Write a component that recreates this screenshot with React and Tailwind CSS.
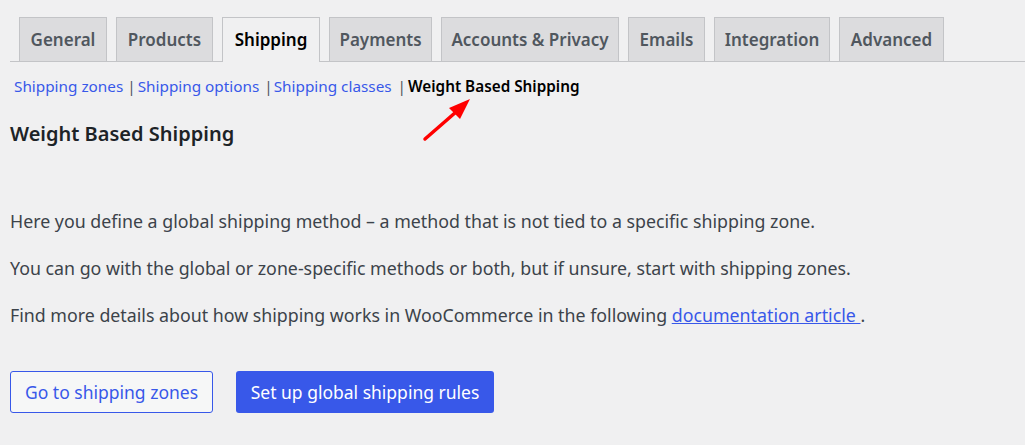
import React from "react";

const tabs = [
  { label: "General", w: "w-[88px]" },
  { label: "Products", w: "w-[97px]" },
  { label: "Shipping", w: "w-[98px]", active: true },
  { label: "Payments", w: "w-[103px]" },
  { label: "Accounts & Privacy", w: "w-[178px]" },
  { label: "Emails", w: "w-[77px]" },
  { label: "Integration", w: "w-[116px]" },
  { label: "Advanced", w: "w-[105px]" },
];

function Tabs() {
  return (
    <div className="flex items-end gap-[9px] pl-[9px] ml-[10px] border-b border-[#c3c4c7] h-[62px]">
      {tabs.map((t) =>
        t.active ? (
          <div key={t.label} className={`${t.w} h-[45px] -mb-px flex items-center justify-center whitespace-nowrap border border-b-0 border-[#c3c4c7] bg-[#f0f0f1] text-black text-[17px] font-semibold`}>
            {t.label}
          </div>
        ) : (
          <div key={t.label} className={`${t.w} h-[44px] flex items-center justify-center whitespace-nowrap border border-b-0 border-[#c3c4c7] bg-[#dcdcde] text-[#50575e] text-[17px] font-semibold`}>
            {t.label}
          </div>
        )
      )}
    </div>
  );
}

function SubNav() {
  return (
    <div className="flex items-center text-[15.3px] pl-[14px] mt-[13px] h-[22px]">
      <a className="text-[#3858e9]">Shipping zones</a>
      <span className="text-[#50575e] ml-[4px] mr-[2px]">|</span>
      <a className="text-[#3858e9]">Shipping options</a>
      <span className="text-[#50575e] ml-[5px] mr-[1px]">|</span>
      <a className="text-[#3858e9]">Shipping classes</a>
      <span className="text-[#50575e] ml-[6px] mr-[2px]">|</span>
      <span className="text-black font-semibold">Weight Based Shipping</span>
    </div>
  );
}

export default function App() {
  return (
    <div className="relative w-[1025px] h-[445px] bg-[#f0f0f1] overflow-hidden" style={{ fontFamily: '"Noto Sans", "Open Sans", sans-serif' }}>
      <Tabs />
      <SubNav />
      <h2 className="ml-[10px] mt-[24px] text-[20px] font-semibold text-[#1d2327] leading-[26px]">Weight Based Shipping</h2>
      <div className="ml-[10px] mt-[62px] text-[17.8px] text-[#3c434a] leading-[24px] flex flex-col gap-[23px]">
        <p>Here you define a global shipping method – a method that is not tied to a specific shipping zone.</p>
        <p>You can go with the global or zone-specific methods or both, but if unsure, start with shipping zones.</p>
        <p>
          Find more details about how shipping works in WooCommerce in the following{" "}
          <a className="text-[#3858e9] underline">documentation article </a>.
        </p>
      </div>
      <div className="ml-[10px] mt-[44px] flex gap-[23px]">
        <button className="h-[42px] w-[203px] rounded-[3px] border border-[#3858e9] bg-[#f6f7f7] text-[#3858e9] text-[17.5px]">
          Go to shipping zones
        </button>
        <button className="h-[42px] w-[258px] rounded-[3px] bg-[#3858e9] text-white text-[17.5px]">
          Set up global shipping rules
        </button>
      </div>
      <svg className="absolute left-[420px] top-[95px]" width="56" height="50" viewBox="0 0 56 50">
        <line x1="5" y1="44" x2="36" y2="17" stroke="#f00" strokeWidth="3.5" strokeLinecap="round" />
        <polygon points="50,4 29,13 40,24" fill="#f00" />
      </svg>
    </div>
  );
}
